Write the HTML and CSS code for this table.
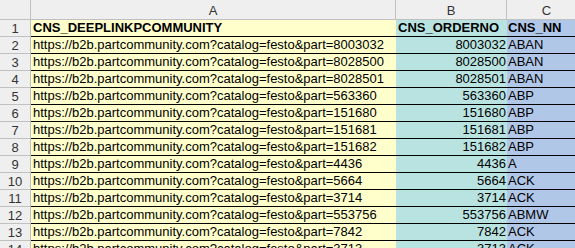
FILE: index.html
```html
<!DOCTYPE html>
<html>
<head>
<meta charset="utf-8">
<link rel="stylesheet" href="styles.css">
</head>
<body>
<div class="sheet">
  <div class="corner"></div>
  <div class="colhead">A</div>
  <div class="colhead">B</div>
  <div class="colhead last">C</div>

  <div class="rowhead">1</div>
  <div class="cell a bold">CNS_DEEPLINKPCOMMUNITY</div>
  <div class="cell b bold">CNS_ORDERNO</div>
  <div class="cell c bold">CNS_NN</div>

  <div class="rowhead">2</div>
  <div class="cell a">https://b2b.partcommunity.com?catalog=festo&amp;part=8003032</div>
  <div class="cell b num">8003032</div>
  <div class="cell c">ABAN</div>

  <div class="rowhead">3</div>
  <div class="cell a">https://b2b.partcommunity.com?catalog=festo&amp;part=8028500</div>
  <div class="cell b num">8028500</div>
  <div class="cell c">ABAN</div>

  <div class="rowhead">4</div>
  <div class="cell a">https://b2b.partcommunity.com?catalog=festo&amp;part=8028501</div>
  <div class="cell b num">8028501</div>
  <div class="cell c">ABAN</div>

  <div class="rowhead">5</div>
  <div class="cell a">https://b2b.partcommunity.com?catalog=festo&amp;part=563360</div>
  <div class="cell b num">563360</div>
  <div class="cell c">ABP</div>

  <div class="rowhead">6</div>
  <div class="cell a">https://b2b.partcommunity.com?catalog=festo&amp;part=151680</div>
  <div class="cell b num">151680</div>
  <div class="cell c">ABP</div>

  <div class="rowhead">7</div>
  <div class="cell a">https://b2b.partcommunity.com?catalog=festo&amp;part=151681</div>
  <div class="cell b num">151681</div>
  <div class="cell c">ABP</div>

  <div class="rowhead">8</div>
  <div class="cell a">https://b2b.partcommunity.com?catalog=festo&amp;part=151682</div>
  <div class="cell b num">151682</div>
  <div class="cell c">ABP</div>

  <div class="rowhead">9</div>
  <div class="cell a">https://b2b.partcommunity.com?catalog=festo&amp;part=4436</div>
  <div class="cell b num">4436</div>
  <div class="cell c">A</div>

  <div class="rowhead">10</div>
  <div class="cell a">https://b2b.partcommunity.com?catalog=festo&amp;part=5664</div>
  <div class="cell b num">5664</div>
  <div class="cell c">ACK</div>

  <div class="rowhead">11</div>
  <div class="cell a">https://b2b.partcommunity.com?catalog=festo&amp;part=3714</div>
  <div class="cell b num">3714</div>
  <div class="cell c">ACK</div>

  <div class="rowhead">12</div>
  <div class="cell a">https://b2b.partcommunity.com?catalog=festo&amp;part=553756</div>
  <div class="cell b num">553756</div>
  <div class="cell c">ABMW</div>

  <div class="rowhead">13</div>
  <div class="cell a">https://b2b.partcommunity.com?catalog=festo&amp;part=7842</div>
  <div class="cell b num">7842</div>
  <div class="cell c">ACK</div>

  <div class="rowhead">14</div>
  <div class="cell a">https://b2b.partcommunity.com?catalog=festo&amp;part=3713</div>
  <div class="cell b num">3713</div>
  <div class="cell c">ACK</div>
</div>
</body>
</html>
```

FILE: styles.css
```css
html, body {
  margin: 0;
  padding: 0;
  background: #ffffff;
  overflow: hidden;
}
.sheet {
  display: grid;
  grid-template-columns: 31px 365px 111px 80px;
  grid-auto-rows: 17px;
  grid-template-rows: 20px;
  font-family: "Liberation Sans", Arial, sans-serif;
  font-size: 13px;
  color: #000;
  width: 587px;
}
.corner, .colhead, .rowhead {
  background: #efefef;
  border-right: 1px solid #c0c0c0;
  border-bottom: 1px solid #c0c0c0;
  color: #333;
  box-sizing: border-box;
}
.colhead {
  display: flex;
  align-items: center;
  justify-content: center;
  padding-top: 1px;
}
.rowhead {
  display: flex;
  align-items: center;
  justify-content: center;
}
.cell {
  box-sizing: border-box;
  border-bottom: 1px solid #000;
  padding: 0 2px;
  line-height: 16px;
  white-space: nowrap;
  overflow: hidden;
}
.a { background: #ffffcc; }
.b { background: #b9e3e0; }
.c { background: #b0c7e8; padding-left: 1px; }
.num { text-align: right; padding-right: 1px; }
.bold { font-weight: bold; }
```
